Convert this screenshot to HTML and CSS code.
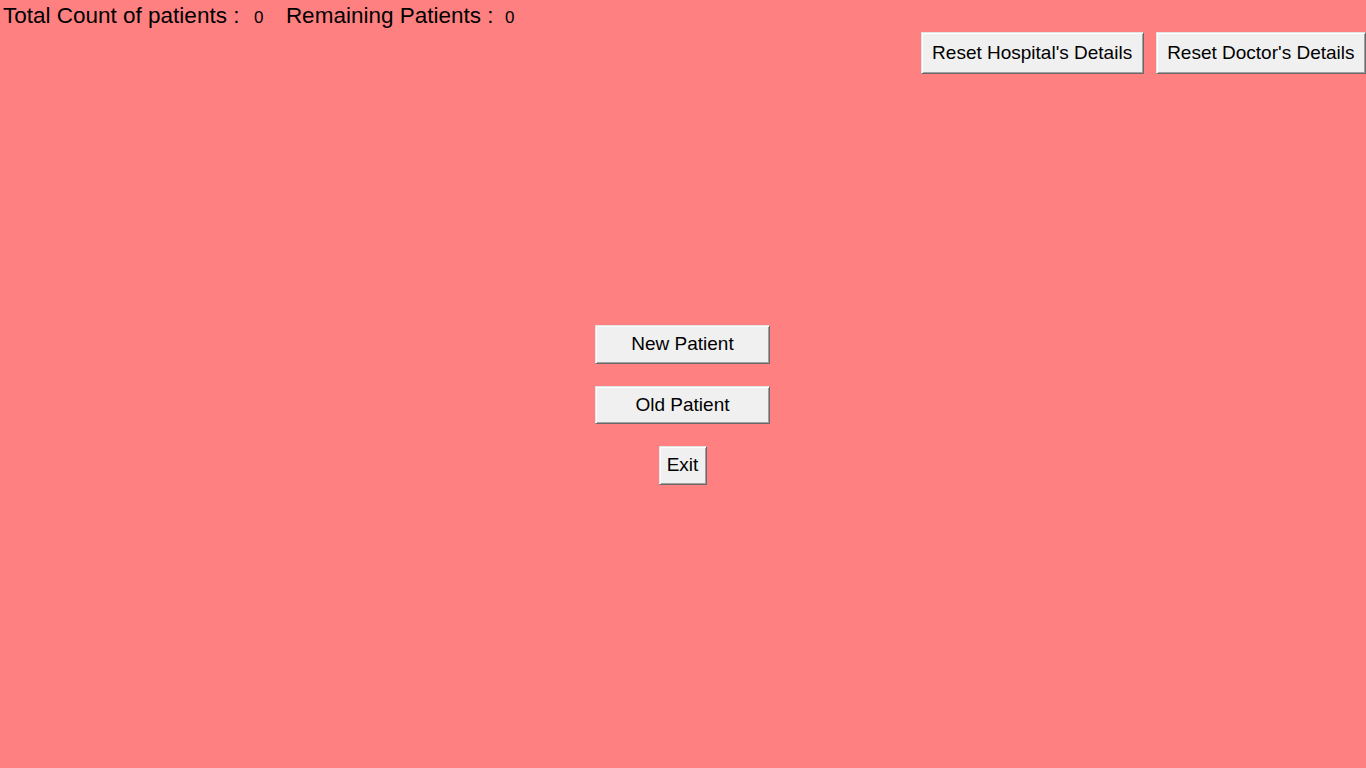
FILE: index.html
```html
<!DOCTYPE html>
<html lang="en">
<head>
<meta charset="utf-8">
<title>Hospital</title>
<link rel="stylesheet" href="styles.css">
</head>
<body>
<div class="app">
  <div class="stats">
    <span class="stat-label">Total Count of patients :</span>
    <span class="stat-value first">0</span>
    <span class="stat-label second">Remaining Patients :</span>
    <span class="stat-value last">0</span>
  </div>
  <div class="resets">
    <button class="btn reset-btn">Reset Hospital's Details</button>
    <button class="btn reset-btn">Reset Doctor's Details</button>
  </div>
  <div class="menu">
    <button class="btn wide-btn">New Patient</button>
    <button class="btn wide-btn">Old Patient</button>
    <button class="btn exit-btn">Exit</button>
  </div>
</div>
</body>
</html>
```
FILE: styles.css
```css
html, body {
  margin: 0;
  padding: 0;
  height: 100%;
}
body {
  background: #ff8080;
  font-family: "Liberation Sans", Arial, sans-serif;
  color: #000;
  overflow: hidden;
}
.app {
  display: flex;
  flex-direction: column;
  width: 1366px;
  height: 768px;
}
.stats {
  display: flex;
  align-items: baseline;
  height: 32px;
  line-height: 32px;
  padding-left: 3px;
  white-space: nowrap;
}
.stat-label {
  font-size: 22.5px;
}
.stat-value {
  font-size: 17px;
}
.stat-value.first {
  margin-left: 14.5px;
}
.stat-label.second {
  margin-left: 22.5px;
}
.stat-value.last {
  margin-left: 11.5px;
}
.btn {
  box-sizing: border-box;
  font-family: "Liberation Sans", Arial, sans-serif;
  font-size: 19px;
  color: #000;
  background: #f0f0f0;
  border-style: solid;
  border-width: 1px;
  border-color: #e3e3e3 #696969 #696969 #e3e3e3;
  box-shadow: inset 1px 1px 0 #ffffff, inset -1px -1px 0 #a0a0a0;
  border-radius: 0;
  margin: 0;
  display: flex;
  align-items: center;
  justify-content: center;
  white-space: nowrap;
  cursor: default;
}
.resets {
  display: flex;
  justify-content: flex-end;
  gap: 12px;
  height: 42px;
}
.reset-btn {
  height: 42px;
  padding: 0 10.5px;
}
.menu {
  display: flex;
  flex-direction: column;
  align-items: center;
  gap: 22px;
  margin-top: 251px;
  padding-right: 1px;
}
.wide-btn {
  width: 175px;
  height: 38.5px;
  padding: 0;
}
.exit-btn {
  width: 48px;
  height: 38.5px;
  padding: 0;
}
```
